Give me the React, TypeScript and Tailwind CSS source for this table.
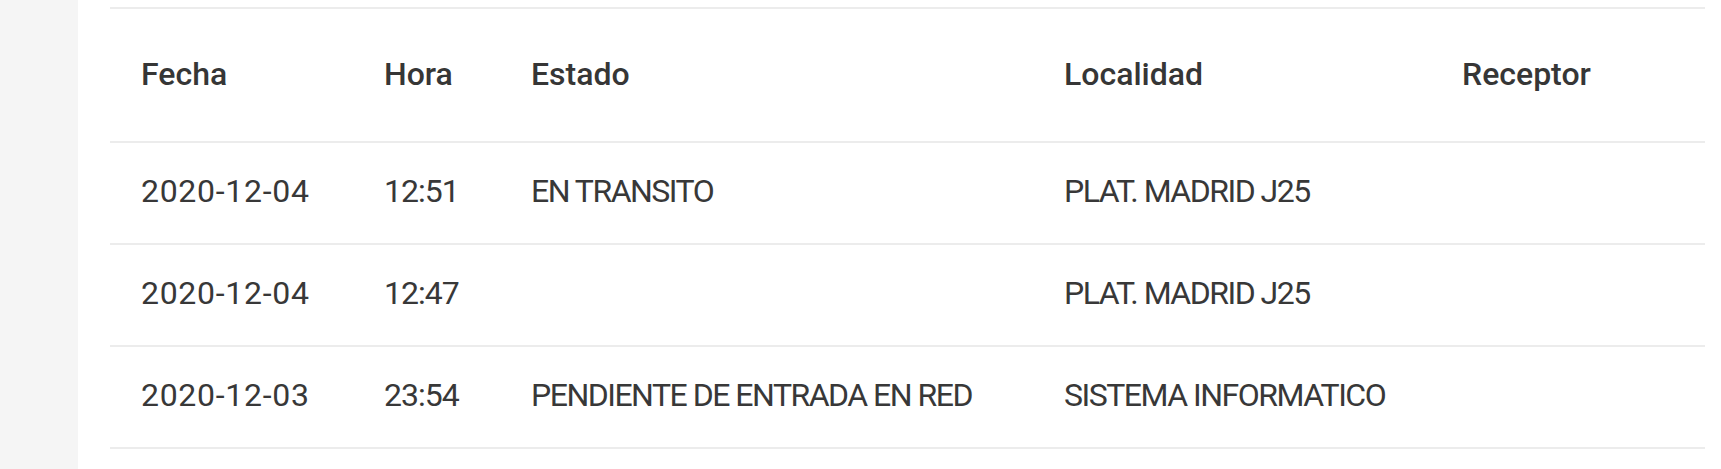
import React from "react";

type Evento = {
  fecha: string;
  hora: string;
  estado: string;
  localidad: string;
  receptor: string;
};

const eventos: Evento[] = [
  { fecha: "2020-12-04", hora: "12:51", estado: "EN TRANSITO", localidad: "PLAT. MADRID J25", receptor: "" },
  { fecha: "2020-12-04", hora: "12:47", estado: "", localidad: "PLAT. MADRID J25", receptor: "" },
  { fecha: "2020-12-03", hora: "23:54", estado: "PENDIENTE DE ENTRADA EN RED", localidad: "SISTEMA INFORMATICO", receptor: "" },
];

const columnas = ["Fecha", "Hora", "Estado", "Localidad", "Receptor"];

// the original font is narrower in capitals and wider in dates than Roboto
const tracking = [
  "tracking-[0.7px]",
  "tracking-[-1px]",
  "tracking-[-1.5px]",
  "tracking-[-1.5px]",
  "tracking-[-1.5px]",
];

const App: React.FC = () => {
  return (
    <div className="flex h-screen bg-white font-['Roboto',sans-serif] text-[#383838]">
      <aside className="w-[78px] shrink-0 bg-[#f5f5f5]" />

      <main className="flex-1 pl-[32px] pr-[16px] pt-[7px]">
        <table className="w-full table-fixed border-collapse border-t-2 border-[#ececec]">
          <colgroup>
            <col className="w-[243px]" />
            <col className="w-[147px]" />
            <col className="w-[533px]" />
            <col className="w-[398px]" />
            <col className="w-[274px]" />
          </colgroup>
          <thead>
            <tr className="h-[134px] border-b-2 border-[#ececec]">
              {columnas.map((c) => (
                <th
                  key={c}
                  className="pl-[31px] pb-[2px] text-left align-middle text-[32px] font-medium leading-none text-[#363636]"
                >
                  {c}
                </th>
              ))}
            </tr>
          </thead>
          <tbody>
            {eventos.map((e, i) => (
              <tr key={i} className="h-[102px] border-b-2 border-[#ececec]">
                {[e.fecha, e.hora, e.estado, e.localidad, e.receptor].map((v, j) => (
                  <td
                    key={j}
                    className={`pl-[31px] pb-[4px] align-middle text-[32px] font-normal leading-none whitespace-nowrap ${tracking[j]}`}
                  >
                    {v}
                  </td>
                ))}
              </tr>
            ))}
          </tbody>
        </table>
      </main>
    </div>
  );
};

export default App;
